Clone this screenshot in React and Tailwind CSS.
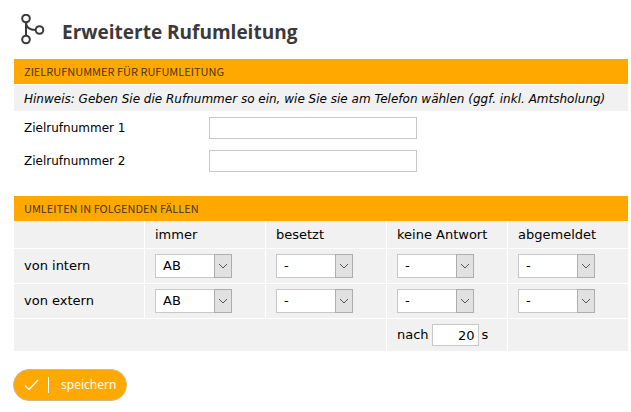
import React from 'react'

const columns = ['immer', 'besetzt', 'keine Antwort', 'abgemeldet']

const rows = [
  { label: 'von intern', values: ['AB', '-', '-', '-'] },
  { label: 'von extern', values: ['AB', '-', '-', '-'] },
]

function BranchIcon() {
  return (
    <svg width="24" height="32" viewBox="0 0 24 32" fill="none" stroke="#3a3a3a" strokeWidth="2" aria-hidden="true">
      <circle cx="5" cy="4.5" r="3.8" />
      <circle cx="5" cy="25.5" r="3.8" />
      <circle cx="18.5" cy="16" r="3.8" />
      <path d="M5 8.5v13M5 8.5c0 5 4 7.500 9.500 7.500" />
    </svg>
  )
}

function SectionTitle({ children }) {
  return (
    <h2 className="bg-[#ffa800] px-[10px] font-['Noto_Sans_CJK_SC',sans-serif] text-[11px] leading-[25px] text-[#4a3510] uppercase">
      {children}
    </h2>
  )
}

function NumberField({ id, label }) {
  return (
    <div className="flex h-[33px] items-center px-[10px]">
      <label htmlFor={id} className="w-[185px]">{label}</label>
      <input id={id} type="text" className="h-[22px] w-[208px] border border-[#c8c8c8] bg-white px-1" />
    </div>
  )
}

function CaseSelect({ label, value }) {
  return (
    <div className="relative h-6 w-[77px]">
      <select
        aria-label={label}
        defaultValue={value}
        className="block h-6 w-full appearance-none border border-[#c8c8c8] bg-white pl-[7px] text-black"
      >
        <option>-</option>
        <option>AB</option>
      </select>
      <span className="pointer-events-none absolute inset-y-0 right-0 flex w-[18px] items-center justify-center border border-[#adadad] bg-[#e1e1e1]">
        <svg width="10" height="6" viewBox="0 0 10 6" fill="none" stroke="#555" aria-hidden="true">
          <path d="M1 1l4 4 4-4" />
        </svg>
      </span>
    </div>
  )
}

export default function App() {
  return (
    <form
      className="bg-white pr-[3px] pl-[14px] font-['DejaVu_Sans',sans-serif] text-[13px] leading-[20px] text-black"
      onSubmit={(e) => e.preventDefault()}
    >
      <header className="flex h-[59px] items-center gap-[17px] pl-[7px]">
        <BranchIcon />
        <h1 className="pt-1 font-['Open_Sans',sans-serif] text-[19px] leading-[28px] font-bold text-[#3a3a3a]">
          Erweiterte Rufumleitung
        </h1>
      </header>

      <section className="text-[12px]">
        <SectionTitle>Zielrufnummer für Rufumleitung</SectionTitle>
        <p className="mt-px bg-[#f1f1f1] px-[10px] pt-1 pb-[2px] italic">
          Hinweis: Geben Sie die Rufnummer so ein, wie Sie sie am Telefon wählen (ggf. inkl. Amtsholung)
        </p>
        <div className="pb-[19px]">
          <NumberField id="target1" label="Zielrufnummer 1" />
          <NumberField id="target2" label="Zielrufnummer 2" />
        </div>
      </section>

      <section>
        <SectionTitle>Umleiten in folgenden Fällen</SectionTitle>
        <table className="w-full table-fixed border-separate border-spacing-0 bg-[#f1f1f1] text-left">
          <thead>
            <tr className="h-7">
              <td className="w-[130px] border-b border-white" />
              {columns.map((name) => (
                <th key={name} scope="col" className="border-b border-l border-white pl-[10px] font-normal">
                  {name}
                </th>
              ))}
            </tr>
          </thead>
          <tbody>
            {rows.map((row) => (
              <tr key={row.label} className="h-[35px]">
                <th scope="row" className="border-b border-white pl-[10px] font-normal">{row.label}</th>
                {row.values.map((value, i) => (
                  <td key={columns[i]} className="border-b border-l border-white pl-[10px]">
                    <CaseSelect label={`${row.label} ${columns[i]}`} value={value} />
                  </td>
                ))}
              </tr>
            ))}
            <tr className="h-8">
              <td colSpan={3} />
              <td className="border-l border-white pl-[10px]">
                <div className="flex items-center gap-[3px]">
                  <label htmlFor="delay">nach</label>
                  <input
                    id="delay"
                    type="text"
                    defaultValue="20"
                    className="h-[22px] w-[47px] border border-[#c8c8c8] bg-white pr-[3px] text-right"
                  />
                  <span>s</span>
                </div>
              </td>
              <td className="border-l border-white" />
            </tr>
          </tbody>
        </table>
      </section>

      <button
        type="submit"
        className="mt-[18px] -ml-px flex h-8 items-center rounded-full border border-[#d0b890] bg-[#ffa800] px-[10px] font-['Noto_Sans',sans-serif] text-[12px] text-white"
      >
        <svg width="15" height="12" viewBox="0 0 15 12" fill="none" stroke="currentColor" strokeWidth="1.3" aria-hidden="true">
          <path d="M1 6.500l4 4L14 1" />
        </svg>
        <span className="mr-3 ml-[9px] h-4 w-px bg-white" />
        speichern
      </button>
    </form>
  )
}
